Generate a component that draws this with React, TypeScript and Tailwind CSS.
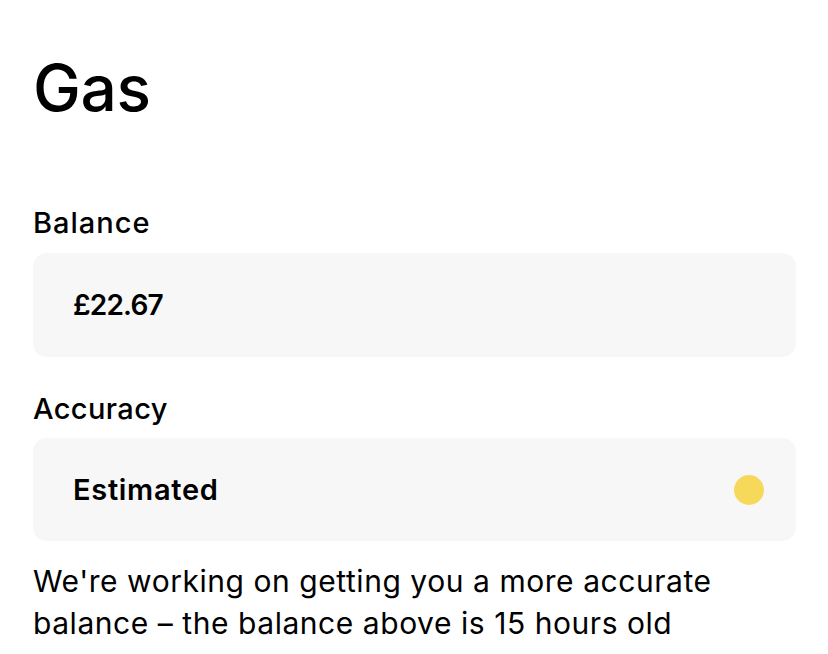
export default function App() {
  return (
    <div className="min-h-screen bg-white pl-[33px] pr-[32px] pt-[56px] text-black" style={{ fontFamily: "Inter, 'Noto Sans', sans-serif" }}>
      <h1 className="text-[64px] leading-none font-medium tracking-[-0.3px]">Gas</h1>

      <div className="mt-[85px]">
        <p className="text-[29px] leading-[36px] font-medium tracking-[1px]">Balance</p>
        <div className="mt-[12px] h-[104px] rounded-[14px] bg-[#f7f7f7] px-[40px] flex items-center">
          <span className="text-[28px] font-semibold tracking-[-0.8px]">£22.67</span>
        </div>
      </div>

      <div className="mt-[34px]">
        <p className="text-[29px] leading-[36px] font-medium tracking-[0.4px]">Accuracy</p>
        <div className="mt-[11px] h-[103px] rounded-[14px] bg-[#f7f7f7] pl-[40px] pr-[32px] flex items-center justify-between">
          <span className="text-[29px] font-semibold tracking-[0.7px]">Estimated</span>
          <span className="w-[30px] h-[30px] rounded-full bg-[#f6d95b]" />
        </div>
      </div>

      <p className="mt-[19px] text-[30px] leading-[42px] font-normal tracking-[0.55px]">
        We're working on getting you a more accurate balance – the balance above is 15 hours old
      </p>
    </div>
  );
}
